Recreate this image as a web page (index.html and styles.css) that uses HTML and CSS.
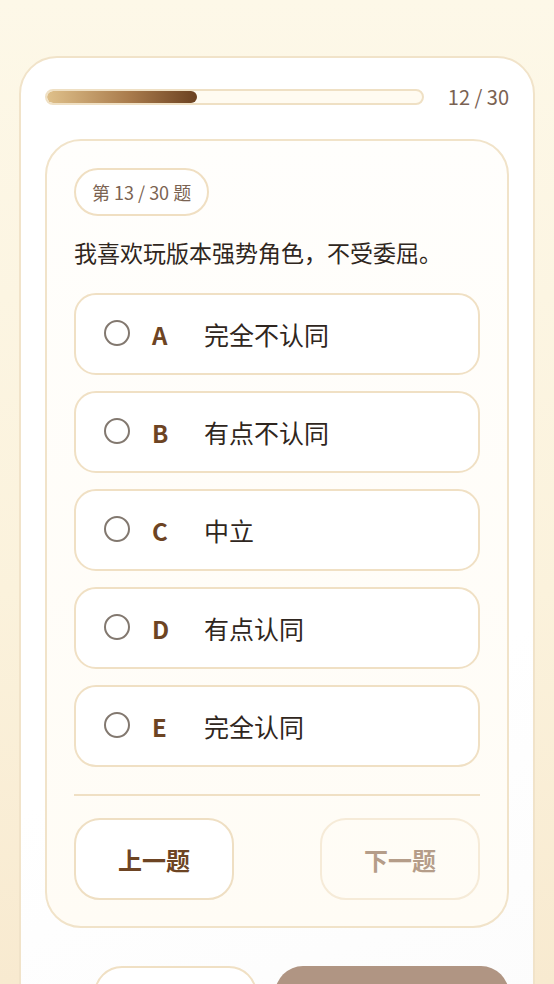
FILE: index.html
```html
<!DOCTYPE html>
<html lang="zh-CN">
<head>
  <meta charset="UTF-8">
  <title>性格测试</title>
  <link rel="stylesheet" href="styles.css">
</head>
<body>
  <div class="shell">
    <div class="progress-row">
      <div class="progress-track">
        <div class="progress-fill" style="width: 40%;"></div>
      </div>
      <div class="progress-text">12 / 30</div>
    </div>

    <div class="question-card">
      <div class="badge">第 13 / 30 题</div>
      <p class="question">我喜欢玩版本强势角色，不受委屈。</p>

      <div class="options">
        <label class="option"><span class="radio"></span><span class="letter">A</span><span class="label">完全不认同</span></label>
        <label class="option"><span class="radio"></span><span class="letter">B</span><span class="label">有点不认同</span></label>
        <label class="option"><span class="radio"></span><span class="letter">C</span><span class="label">中立</span></label>
        <label class="option"><span class="radio"></span><span class="letter">D</span><span class="label">有点认同</span></label>
        <label class="option"><span class="radio"></span><span class="letter">E</span><span class="label">完全认同</span></label>
      </div>

      <div class="divider"></div>

      <div class="nav">
        <button class="nav-btn">上一题</button>
        <button class="nav-btn disabled">下一题</button>
      </div>
    </div>

    <div class="footer-actions">
      <button class="foot-btn outline"></button>
      <button class="foot-btn filled"></button>
    </div>
  </div>
</body>
</html>
```

FILE: styles.css
```css
body {
  margin: 0;
  height: 984px;
  font-family: "Noto Sans CJK SC", "Noto Sans", sans-serif;
  background: linear-gradient(180deg, #fdf8e8 0%, #fbf2dc 60%, #f8ead0 100%);
  overflow: hidden;
}
.shell {
  margin: 56px 19px 0;
  background: linear-gradient(160deg, #ffffff 60%, #fbfbfb 100%);
  border: 2px solid #f1e3c9;
  border-radius: 38px;
  padding: 30px 24px 40px;
  height: 1000px;
}
.progress-row {
  display: flex;
  align-items: center;
  gap: 24px;
  height: 18px;
  margin-bottom: 33px;
}
.progress-track {
  flex: 1;
  height: 12px;
  border: 2px solid #efe0c4;
  border-radius: 10px;
  background: #fffbf1;
  overflow: hidden;
}
.progress-fill {
  height: 100%;
  border-radius: 10px;
  background: linear-gradient(90deg, #dfc08a 0%, #a97b4c 55%, #6b4121 100%);
}
.progress-text {
  font-size: 20px;
  color: #7a6252;
  line-height: 18px;
  white-space: nowrap;
}
.question-card {
  border: 2px solid #f1e3c9;
  border-radius: 36px;
  background: linear-gradient(180deg, #fffefc 0%, #fffcf5 100%);
  padding: 27px 27px 26px;
}
.badge {
  display: inline-flex;
  align-items: center;
  height: 44px;
  padding: 0 16px;
  border: 2px solid #f0dfc2;
  border-radius: 24px;
  background: #fff;
  font-size: 18px;
  color: #7b6352;
}
.question {
  margin: 20px 0 25px;
  font-size: 23px;
  line-height: 32px;
  color: #2f2620;
}
.options {
  display: flex;
  flex-direction: column;
  gap: 16px;
}
.option {
  display: flex;
  align-items: center;
  height: 78px;
  padding: 0 28px;
  border: 2px solid #f0e0c4;
  border-radius: 22px;
  background: #fff;
}
.radio {
  width: 22px;
  height: 22px;
  border: 2px solid #82786f;
  border-radius: 50%;
  margin-right: 22px;
  margin-top: -2px;
}
.letter {
  width: 30px;
  font-size: 24px;
  font-weight: 600;
  color: #6d4423;
  margin-right: 22px;
}
.label {
  font-size: 25px;
  color: #2f2620;
}
.divider {
  height: 2px;
  background: #f0e0c4;
  margin: 27px 0 22px;
}
.nav {
  display: flex;
  justify-content: space-between;
}
.nav-btn {
  width: 160px;
  height: 82px;
  border: 2px solid #efdfc3;
  border-radius: 26px;
  background: #fff;
  font-family: inherit;
  font-size: 24px;
  font-weight: 700;
  color: #6d4423;
}
.nav-btn.disabled {
  background: transparent;
  border-color: #f6ebd8;
  color: #b59d89;
}
.footer-actions {
  display: flex;
  gap: 18px;
  margin: 38px 0 0 49px;
}
.foot-btn {
  height: 82px;
  border-radius: 28px;
}
.foot-btn.outline {
  width: 163px;
  border: 2px solid #f0e0c4;
  background: #fff;
}
.foot-btn.filled {
  width: 234px;
  border: none;
  background: #b09583;
}
```
